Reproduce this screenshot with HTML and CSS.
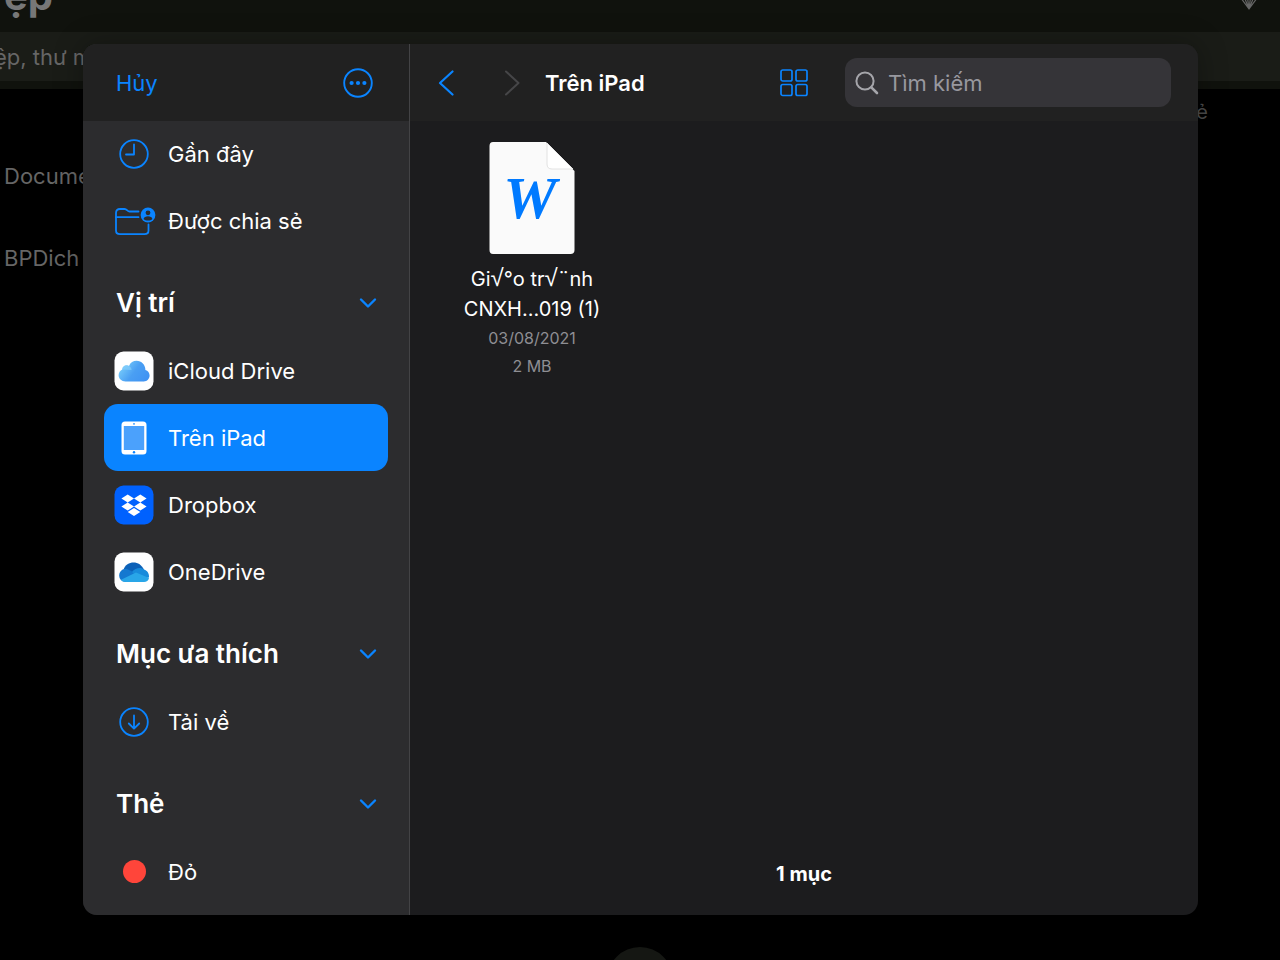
FILE: index.html
```html
<!DOCTYPE html>
<html lang="vi">
<head>
<meta charset="utf-8">
<meta name="viewport" content="width=device-width, initial-scale=1">
<title>Trên iPad</title>
<link rel="stylesheet" href="styles.css">
</head>
<body>
<div class="backdrop">
  <header class="app-bar">
    <h1 class="app-title">ệp</h1>
    <svg class="gem" width="26" height="24" viewBox="0 0 26 24" fill="none" stroke="currentColor" stroke-width="1.200" stroke-linejoin="round"><path d="M7 1h12l5 7-11 15L2 8zM2 8h22M11 8l2 15 2-15M7 8l6 15 6-15"/></svg>
  </header>
  <div class="app-search"><input class="app-search-input" type="text" placeholder="ệp, thư mục" aria-label="Tệp, thư mục"></div>
  <div class="app-action">ẻ</div>
  <ul class="app-files">
    <li>Docume</li>
    <li>BPDich</li>
  </ul>
  <div class="app-fab"></div>
</div>

<div class="overlay">
  <section class="picker" role="dialog" aria-label="Trên iPad">
    <aside class="sidebar">
      <header class="bar sidebar-bar">
        <button class="text-btn" type="button">Hủy</button>
        <button class="icon-btn" type="button" aria-label="Thêm">
          <svg width="30" height="30" viewBox="0 0 30 30"><circle cx="15" cy="15" r="13.800" fill="none" stroke="currentColor" stroke-width="1.900"/><g fill="currentColor"><circle cx="8.600" cy="15" r="2.100"/><circle cx="15" cy="15" r="2.100"/><circle cx="21.400" cy="15" r="2.100"/></g></svg>
        </button>
      </header>
      <nav class="nav">
        <a class="row" href="#recent">
          <span class="row-icon"><svg width="30" height="30" viewBox="0 0 30 30" fill="none" stroke="currentColor" stroke-width="1.800" stroke-linecap="round" stroke-linejoin="round"><circle cx="15" cy="15" r="13.800"/><path d="M15 5.500V15.500H7"/></svg></span>
          Gần đây
        </a>
        <a class="row" href="#shared">
          <span class="row-icon"><svg class="wide-icon" width="42" height="30" viewBox="0 0 42 30"><g fill="none" stroke="currentColor" stroke-width="1.800" stroke-linecap="round" stroke-linejoin="round"><path d="M24.500 5.500H15.500C13.500 5.500 13 3 10.500 3H6C3.500 3 2 4.300 2 7V24.500C2 27 3.500 28.200 6 28.200H30.500C33 28.200 34.500 27 34.500 24.500V18.500"/><path d="M2 11.200H24.500"/></g><circle cx="34" cy="9" r="7.400" fill="currentColor"/><g class="badge-person"><circle cx="34" cy="6.800" r="2.400"/><path d="M29.600 13C30 9.400 38 9.400 38.400 13C36.500 15 31.500 15 29.600 13Z"/></g></svg></span>
          Được chia sẻ
        </a>
        <h2 class="group">Vị trí <button class="icon-btn" type="button" aria-label="Thu gọn Vị trí"><svg width="18" height="12" viewBox="0 0 18 12" fill="none" stroke="currentColor" stroke-width="2.400" stroke-linecap="round" stroke-linejoin="round"><path d="M2 2.500L9 9.500L16 2.500"/></svg></button></h2>
        <a class="row" href="#icloud">
          <span class="row-icon"><svg width="40" height="40" viewBox="0 0 40 40"><defs><linearGradient id="ic" x1="0" y1=".3" x2="1" y2=".8"><stop offset="0" stop-color="#7cd0fb"/><stop offset=".5" stop-color="#4a9ff3"/><stop offset="1" stop-color="#3f92f3"/></linearGradient></defs><rect x=".5" y=".5" width="39" height="39" rx="9" fill="#fff"/><path d="M11.500 30.500C7.500 30.500 4.600 27.600 4.600 24.300C4.600 21.600 6 19.400 8.200 18.500C8.200 15.300 12 13.200 15 14.900C16.500 11.500 19.200 9.800 22.500 9.800C27.500 9.800 31.500 14 31.400 19C34 19.600 35.600 22 35.600 24.600C35.600 28 33 30.500 29.800 30.500Z" fill="url(#ic)"/><path d="M8.200 18.500C8.200 15.300 12 13.200 15 14.900C16.600 15.900 17.500 17.200 17.600 19" fill="#8ad2fb" opacity=".6"/></svg></span>
          iCloud Drive
        </a>
        <a class="row row-selected" href="#ipad" aria-current="page">
          <span class="row-icon"><svg width="26" height="34" viewBox="0 0 26 34"><rect x=".5" y=".5" width="25" height="33" rx="3.500" fill="#fff"/><rect x="2.800" y="5" width="20.400" height="24" fill="#4ba1fc"/><circle cx="13" cy="2.900" r=".8" fill="#0a84ff"/><circle cx="13" cy="31.200" r="1.200" fill="#0a84ff"/></svg></span>
          Trên iPad
        </a>
        <a class="row" href="#dropbox">
          <span class="row-icon"><svg width="40" height="40" viewBox="0 0 40 40"><rect x=".5" y=".5" width="39" height="39" rx="9" fill="#0061fe"/><path fill="#fff" d="M13.700 9.600l6.300 4-6.300 4-6.300-4zM26.300 9.600l6.300 4-6.300 4-6.300-4zM13.700 17.600l6.300 4-6.300 4-6.300-4zM26.300 17.600l6.300 4-6.300 4-6.300-4zM20 23l6.300 4-6.300 4-6.300-4z"/></svg></span>
          Dropbox
        </a>
        <a class="row" href="#onedrive">
          <span class="row-icon"><svg width="40" height="40" viewBox="0 0 40 40"><rect x=".5" y=".5" width="39" height="39" rx="9" fill="#fff"/><path d="M9.500 17.500C12.500 8.500 26 7.500 30 18L22 24Z" fill="#0c61b8"/><path d="M12 30C7.500 30 5.200 27 5.200 23.500C5.200 19.500 8.500 16.500 12.500 16.800L25 23L18 30Z" fill="#1478d0"/><path d="M18 20C21 15.500 27.500 14.800 30 17.500C33.500 18.500 35.400 22 35 25.500L26 27Z" fill="#188bdb"/><path d="M7 27.800L22 20.500L35 26C34.500 28.500 32.500 30 30 30H12C9.800 30 8 29.200 7 27.800Z" fill="#29a6e8"/></svg></span>
          OneDrive
        </a>
        <h2 class="group">Mục ưa thích <button class="icon-btn" type="button" aria-label="Thu gọn Mục ưa thích"><svg width="18" height="12" viewBox="0 0 18 12" fill="none" stroke="currentColor" stroke-width="2.400" stroke-linecap="round" stroke-linejoin="round"><path d="M2 2.500L9 9.500L16 2.500"/></svg></button></h2>
        <a class="row" href="#downloads">
          <span class="row-icon"><svg width="30" height="30" viewBox="0 0 30 30" fill="none" stroke="currentColor" stroke-width="1.800" stroke-linecap="round" stroke-linejoin="round"><circle cx="15" cy="15" r="13.800"/><path d="M15 8.500V21.500M9.800 16.500L15 21.700L20.200 16.500"/></svg></span>
          Tải về
        </a>
        <h2 class="group">Thẻ <button class="icon-btn" type="button" aria-label="Thu gọn Thẻ"><svg width="18" height="12" viewBox="0 0 18 12" fill="none" stroke="currentColor" stroke-width="2.400" stroke-linecap="round" stroke-linejoin="round"><path d="M2 2.500L9 9.500L16 2.500"/></svg></button></h2>
        <a class="row" href="#red">
          <span class="row-icon"><span class="tag-dot"></span></span>
          Đỏ
        </a>
      </nav>
    </aside>

    <main class="content">
      <header class="bar content-bar">
        <div class="history">
          <button class="icon-btn" type="button" aria-label="Quay lại"><svg width="16" height="26" viewBox="0 0 16 26" fill="none" stroke="currentColor" stroke-width="2.200" stroke-linecap="round" stroke-linejoin="round"><path d="M14.500 1.500L2 13L14.500 24.500"/></svg></button>
          <button class="icon-btn" type="button" aria-label="Tiếp" disabled><svg width="16" height="26" viewBox="0 0 16 26" fill="none" stroke="currentColor" stroke-width="2" stroke-linecap="round" stroke-linejoin="round"><path d="M2 1.500L14.500 13L2 24.500"/></svg></button>
        </div>
        <h1 class="title">Trên iPad</h1>
        <button class="icon-btn" type="button" aria-label="Kiểu xem"><svg width="28" height="28" viewBox="0 0 28 28" fill="none" stroke="currentColor" stroke-width="1.700"><rect x="1" y="1" width="11" height="11" rx="1.800"/><rect x="16" y="1" width="11" height="11" rx="1.800"/><rect x="1" y="15.500" width="11" height="11" rx="1.800"/><rect x="16" y="15.500" width="11" height="11" rx="1.800"/></svg></button>
        <label class="search">
          <svg width="24" height="24" viewBox="0 0 24 24" fill="none" stroke="currentColor" stroke-linecap="round"><circle cx="10" cy="10" r="8.600" stroke-width="2"/><path d="M16.300 16.300L22 22" stroke-width="2.600"/></svg>
          <input class="search-input" type="text" placeholder="Tìm kiếm" aria-label="Tìm kiếm">
        </label>
      </header>
      <div class="files">
        <a class="file" href="#file">
          <svg class="file-icon" width="86" height="112" viewBox="0 0 86 112"><path d="M4 0H57L85.500 29V108Q85.500 112 81.500 112H4Q.5 112 .5 108V4Q.5 0 4 0Z" fill="#fafafa"/><path d="M58 1V22Q58 27 63 27H84Z" fill="#fff" stroke="#e2e2e2" stroke-width="1"/><text class="file-letter" x="41" y="76" text-anchor="middle">W</text></svg>
          <span class="file-name">Gi<span class="radical">√</span>°o tr<span class="radical">√</span>¨nh<br>CNXH...019 (1)</span>
          <span class="file-meta">03/08/2021</span>
          <span class="file-meta">2 MB</span>
        </a>
      </div>
      <footer class="count">1 mục</footer>
    </main>
  </section>
</div>
</body>
</html>
```
FILE: styles.css
```css
* { box-sizing: border-box; }

body {
  margin: 0;
  height: 100vh;
  overflow: hidden;
  position: relative;
  background: #000;
  color: #fff;
  font-family: Inter, "Noto Sans", sans-serif;
  font-size: 22px;
}

h1, h2, ul { margin: 0; padding: 0; font-size: inherit; }
a { color: inherit; text-decoration: none; }
button, input { font: inherit; background: none; border: 0; padding: 0; outline: 0; }
svg { display: block; flex: none; }

/* Dimmed app behind the dialog */
.backdrop { position: relative; height: 100%; color: #666; overflow: hidden; }
.app-bar {
  display: flex;
  justify-content: space-between;
  align-items: flex-end;
  height: 32px;
  padding: 0 18px 22px 4px;
  background: #10120d;
}
.app-title { color: #777; font-size: 40px; font-weight: 700; line-height: 28px; }
.app-search { height: 57px; background: #1a1c17; border-bottom: 8px solid #10120d; }
.app-search-input { display: block; width: 100%; height: 49px; text-indent: -6px; }
.app-search-input::placeholder { color: #666; opacity: 1; }
.app-action { padding-right: 72px; text-align: right; font-size: 20px; line-height: 46px; color: #4c4c4c; }
.app-files { list-style: none; padding: 0 4px; line-height: 82px; }
.app-fab {
  position: absolute;
  left: 50%;
  bottom: -53px;
  width: 66px;
  height: 66px;
  margin-left: -33px;
  border-radius: 50%;
  background: #151713;
}

/* File picker dialog */
.overlay {
  position: absolute;
  inset: 0;
  display: flex;
  padding: 44px 82px 45px 83px;
}
.picker {
  flex: 1;
  display: flex;
  min-width: 0;
  overflow: hidden;
  border-radius: 14px;
  background: #1c1c1e;
  box-shadow: 0 0 30px rgba(0, 0, 0, .3);
}
.bar { display: flex; align-items: center; flex: none; height: 77px; background: #212121; }
.icon-btn, .text-btn { color: #0a84ff; }
.icon-btn:disabled { color: #464648; }

.sidebar {
  display: flex;
  flex-direction: column;
  flex: none;
  width: 327px;
  background: #2c2c2e;
  border-right: 1px solid #434345;
}
.sidebar-bar { justify-content: space-between; padding: 0 36px 0 33px; }
.nav { flex: 1; min-height: 0; overflow: hidden; margin-top: -1px; padding: 0 21px; }
.row {
  display: flex;
  align-items: center;
  gap: 14px;
  height: 67px;
  padding-left: 10px;
  border-radius: 14px;
}
.row-selected { background: #0a84ff; }
.row-icon { display: flex; justify-content: center; flex: none; width: 40px; color: #0a84ff; }
.wide-icon { margin-right: -2px; }
.badge-person { fill: #2c2c2e; }
.tag-dot { width: 23px; height: 23px; border-radius: 50%; background: #ff453a; }
.group {
  display: flex;
  align-items: center;
  justify-content: space-between;
  height: 83px;
  padding: 14px 11px 0 12px;
  font-size: 26px;
  font-weight: 600;
}

.content { display: flex; flex-direction: column; flex: 1; min-width: 0; }
.content-bar { padding: 0 27px 0 28px; }
.history { display: flex; gap: 50px; }
.title { margin: 0 auto 0 25px; font-weight: 600; white-space: nowrap; }
.search {
  display: flex;
  align-items: center;
  gap: 9px;
  width: 326px;
  height: 49px;
  margin-left: 37px;
  padding: 0 10px;
  border-radius: 12px;
  background: #353438;
  color: #a5a5aa;
}
.search-input { flex: 1; min-width: 0; color: #fff; }
.search-input::placeholder { color: #98989f; opacity: 1; }

.files { flex: 1; padding: 21px 42px; }
.file { display: flex; flex-direction: column; align-items: center; width: 160px; }
.file-letter {
  fill: #007aff;
  font-family: "Liberation Serif", serif;
  font-size: 60px;
  font-style: italic;
  font-weight: 700;
}
.file-name { margin-top: 10px; font-size: 20px; line-height: 30px; text-align: center; white-space: nowrap; }
.radical { font-family: "Liberation Sans", sans-serif; font-size: 24px; line-height: 20px; }
.file-meta { color: #8e8e93; font-size: 16px; line-height: 28px; }
.count { padding: 0 0 26px; text-align: center; font-size: 20px; font-weight: 700; line-height: 30px; }
```
